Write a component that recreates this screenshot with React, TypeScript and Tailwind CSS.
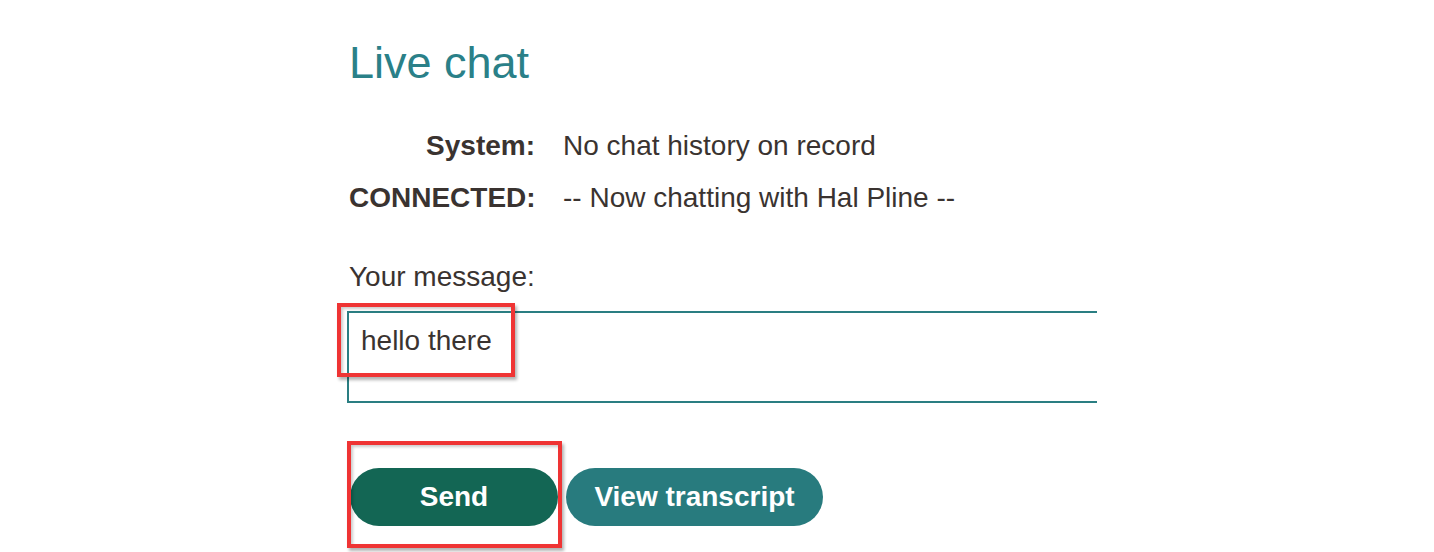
export default function App() {
  return (
    <div className="relative h-[552px] w-full overflow-hidden bg-white pl-[349px] font-['Liberation_Sans',Arial,sans-serif] text-[#3a3330]">
      <h1 className="pt-[37px] text-[45px] leading-[52px] text-[#2a8088]">Live chat</h1>

      {/* chat log */}
      <div className="mt-[31px] grid grid-cols-[186px_1fr] gap-x-[28px] text-[28px] leading-[52px]">
        <div className="text-right font-bold">System:</div>
        <div>No chat history on record</div>
        <div className="text-right font-bold">CONNECTED:</div>
        <div>-- Now chatting with Hal Pline --</div>
      </div>

      <label className="mt-[35px] block text-[28px] leading-[36px]">Your message:</label>
      <div className="-ml-[2px] mt-[16px] h-[92px] w-[750px] border-y-2 border-l-2 border-[#2a7e82] pl-[12px] pt-[10px] text-[28px] leading-[36px]">
        hello there
      </div>

      <div className="mt-[65px] flex gap-[8px] pl-[1px]">
        <button className="h-[58px] w-[208px] rounded-full bg-[#136654] text-[28px] font-bold text-white">
          Send
        </button>
        <button className="h-[58px] w-[257px] rounded-full bg-[#287b7e] text-[28px] font-bold text-white">
          View transcript
        </button>
      </div>

      {/* annotation boxes */}
      <div className="absolute left-[337px] top-[303px] h-[74px] w-[178px] border-[4px] border-[#ef3434] shadow-[2px_3px_3px_rgba(0,0,0,0.3),inset_2px_2px_3px_rgba(0,0,0,0.2)]" />
      <div className="absolute left-[347px] top-[441px] h-[107px] w-[215px] border-[4px] border-[#ef3434] shadow-[2px_3px_3px_rgba(0,0,0,0.3),inset_2px_2px_3px_rgba(0,0,0,0.2)]" />
    </div>
  );
}
